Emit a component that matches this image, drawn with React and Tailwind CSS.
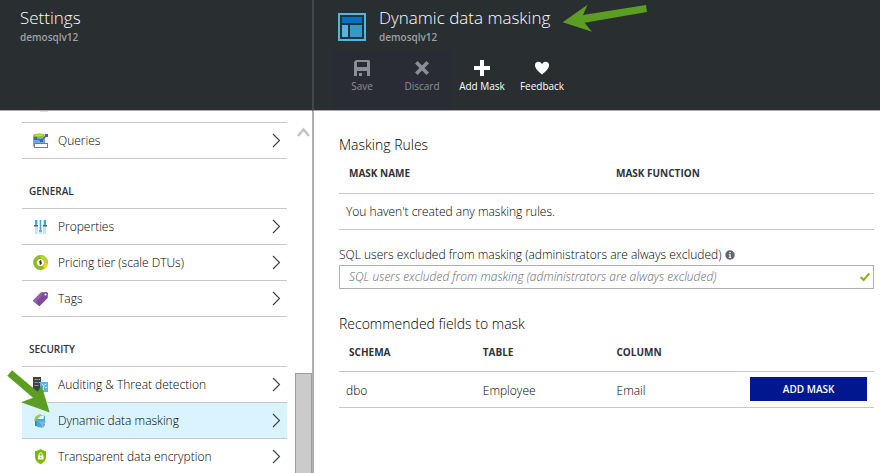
function Chevron() {
  return (
    <svg className="mr-1 ml-auto h-4 w-4 shrink-0" viewBox="0 0 16 16" fill="none" stroke="#3a3f45" strokeWidth="1.1">
      <path d="M6 1 L12.500 7.500 L6 14" />
    </svg>
  );
}

function QueriesIcon() {
  return (
    <svg className="h-4 w-4" viewBox="0 0 16 16">
      <path d="M0 3h12v11H1.500Q0 14 0 12.500z" fill="#55b5e6" />
      <ellipse cx="6" cy="2.300" rx="5.800" ry="1.900" fill="#8fc31f" />
      <ellipse cx="6" cy="2.200" rx="4.300" ry="1" fill="#c3dc3c" />
      <path d="M2.500 5.500 L8.500 7.500 L13.500 2.500" fill="none" stroke="#804998" strokeWidth="1.200" />
      <path d="M1 4h3v3H1zM7 6h3v3H7zM12 1h3v3h-3z" fill="#804998" />
      <rect x="1.500" y="10.500" width="13" height="4" fill="#fff" stroke="#7a7a7a" />
    </svg>
  );
}

function PropertiesIcon() {
  return (
    <svg className="h-4 w-4" viewBox="0 0 16 16">
      <path d="M2 1h3v14H2zM10 1h3v14h-3z" fill="#c3e5f4" />
      <path d="M6 1h3v14H6z" fill="#c3e5f4" />
      <path d="M2 1h2v5H2zM11 1h2v5h-2zM7 1h1v10H7z" fill="#3fa6d6" />
      <path d="M1 6h4v1.500H1zM10 6h4v1.500h-4z" fill="#55676f" />
      <path d="M6 11h3v2H6z" fill="#8aa7b4" />
    </svg>
  );
}

function PricingIcon() {
  return (
    <svg className="h-4 w-4" viewBox="0 0 16 16">
      <circle cx="7.500" cy="7.500" r="5.500" fill="#fff" stroke="#8cbf1a" strokeWidth="3.800" />
      <path d="M7.500 2 A5.500 5.500 0 0 1 13 7.500" fill="none" stroke="#b8d432" strokeWidth="3.800" />
      <path d="M13 7.500 A5.500 5.500 0 0 1 10.500 12.100" fill="none" stroke="#fcd116" strokeWidth="3.800" />
      <path d="M8.600 6.200H7q-.7 0-.7.650t.7.650h1q.7 0 .7.650t-.7.650H6.400M7.500 5.300v4.400" fill="none" stroke="#333" strokeWidth=".9" />
    </svg>
  );
}

function TagIcon() {
  return (
    <svg className="h-4 w-4" viewBox="0 0 16 16">
      <path d="M8 1.500 L13.500 1 Q15 1 15 2.500 L14.700 7 L7 14.800 Q6.300 15.300 5.600 14.800 L.5 10.300 Q0 9.500 .5 9z" fill="#804998" />
      <path d="M8 1.500 L.5 9 Q0 9.500 .5 10.300 L3 12.500 L10.500 1.300z" fill="#925fa8" />
      <circle cx="12.500" cy="3.500" r="1.100" fill="#fff" />
    </svg>
  );
}

function AuditIcon() {
  return (
    <svg className="h-4 w-4" viewBox="0 0 16 16">
      <path d="M0 0h8v15H0z" fill="#3e4246" />
      <path d="M1.500 2.500h4M1.500 5.500h4M1.500 8.500h4" stroke="#8f9498" strokeWidth="1" />
      <path d="M6 2h1v1H6zM6 5h1v1H6z" fill="#b8d432" />
      <path d="M7 5h8v10H7z" fill="#55b5e6" />
      <path d="M8.500 6.500l2 2 3-1.500M10.500 8.500v3M9 12.500h2M12 10.500h2" fill="none" stroke="#c5e9f8" strokeWidth="1" />
    </svg>
  );
}

function MaskingIcon() {
  return (
    <svg className="h-4 w-4" viewBox="0 0 16 16">
      <path d="M2 4 L6 2 L12 3v9L10 14.500Q5 15 2 12.500z" fill="#4aa9dc" />
      <path d="M6.500 3 L11 3 L10.500 6H4.500z" fill="#e8f6fb" />
      <path d="M1 7.500 Q2 2 8 1 L7.500 3.500 Q3.500 5 2 8.500z" fill="#a5ce3a" />
      <path d="M5.500 8.500h8L10.500 11.500v3l-2-1v-2z" fill="#a7afb5" />
      <path d="M2.800 8.500v4.500" stroke="#2f87ba" strokeWidth="1.500" />
    </svg>
  );
}

function ShieldIcon() {
  return (
    <svg className="h-4 w-4" viewBox="0 0 16 16">
      <path d="M7.500 0 Q10 2 13 2 V8 Q13 12.500 7.500 15.200 Q2 12.500 2 8 V2 Q5 2 7.500 0z" fill="#7fba00" />
      <path d="M5 6.500h5.500V10.500H5z" fill="#fff" />
      <path d="M6.200 7V5.500a1.600 1.600 0 0 1 3.200 0V7" fill="none" stroke="#fff" strokeWidth="1" />
      <path d="M7.300 7.800h1v1.400h-1z" fill="#7fba00" />
    </svg>
  );
}

function MenuGroup({ title, items }) {
  return (
    <section>
      {title && <h2 className="flex h-[49px] items-center px-[7px] pt-[14px] text-[10px] leading-4 font-semibold text-[#2f3338]">{title}</h2>}
      <ul className="border-t border-[#c8c8c8]">
        {items.map(({ label, Icon, active }) => (
          <li key={label} className="border-b border-[#c8c8c8]">
            <a href="#" aria-current={active ? "page" : undefined} className={`flex h-[35px] items-center gap-[9px] pl-[11px] ${active ? "bg-[#d9f4fe]" : ""}`}>
              <Icon />
              <span className="whitespace-nowrap">{label}</span>
              <Chevron />
            </a>
          </li>
        ))}
      </ul>
    </section>
  );
}

function Tool({ label, disabled, children }) {
  return (
    <button type="button" disabled={disabled} className={`flex w-[60px] flex-col items-center gap-px pt-[9px] text-[10px] leading-[16px] font-normal whitespace-nowrap ${disabled ? "text-[#8b8f94]" : "text-white"}`}>
      <svg className="h-[18px] w-[18px]" viewBox="0 0 18 18" fill="currentColor">{children}</svg>
      {label}
    </button>
  );
}

const th = "pl-[10px] text-left text-[10px] leading-4 font-bold text-[#2f3338]";

export default function App() {
  return (
    <div className="relative flex h-screen overflow-hidden bg-white font-['Open_Sans','Noto_Sans',sans-serif] text-[12px] font-light text-black">
      <aside className="flex w-[312px] shrink-0 flex-col">
        <header className="h-[111px] shrink-0 border-b border-[#a8abad] bg-[#292e31] px-5 pt-[6px]">
          <h1 className="text-[17px] leading-6 text-white">Settings</h1>
          <p className="text-[10px] leading-[14px] font-semibold text-[#9ea1a4]">demosqlv12</p>
        </header>
        <div className="flex min-h-0 flex-1">
          <nav className="ml-[22px] min-w-0 flex-1 overflow-hidden">
            <div className="h-[11px] pl-[18px]">
              <div className="h-px w-2 bg-[#f4e3a8]" />
            </div>
            <MenuGroup items={[{ label: "Queries", Icon: QueriesIcon }]} />
            <MenuGroup
              title="GENERAL"
              items={[
                { label: "Properties", Icon: PropertiesIcon },
                { label: "Pricing tier (scale DTUs)", Icon: PricingIcon },
                { label: "Tags", Icon: TagIcon },
              ]}
            />
            <MenuGroup
              title="SECURITY"
              items={[
                { label: "Auditing & Threat detection", Icon: AuditIcon },
                { label: "Dynamic data masking", Icon: MaskingIcon, active: true },
                { label: "Transparent data encryption", Icon: ShieldIcon },
              ]}
            />
          </nav>
          <div className="ml-2 flex w-[17px] shrink-0 flex-col">
            <svg className="mt-[15px] h-3 w-[17px]" viewBox="0 0 17 12" fill="none" stroke="#c4c4c4" strokeWidth="2.500">
              <path d="M3 10 L8.500 3.500 L14 10" />
            </svg>
            <div className="mt-[235px] flex-1 border border-b-0 border-[#9d9d9d] bg-[#cbcbcb]" />
          </div>
        </div>
      </aside>

      <main className="flex min-w-0 flex-1 flex-col">
        <header className="h-[111px] shrink-0 border-b border-l-2 border-b-[#a8abad] border-l-[#43474b] bg-[#292e31]">
          <div className="flex gap-[13px] pt-[6px] pl-[24px]">
            <svg className="mt-[7px] h-7 w-7" viewBox="0 0 28 28">
              <rect x="1" y="1" width="26" height="26" fill="#1f3340" stroke="#59b4d9" strokeWidth="2" />
              <path d="M4 4h20v6H4z" fill="#0072c6" />
              <path d="M4 12h6v12H4z" fill="#59b4d9" />
              <path d="M12 12h12v12H12z" fill="#3999c6" />
            </svg>
            <div>
              <h1 className="text-[17px] leading-6 text-white">Dynamic data masking</h1>
              <p className="text-[10px] leading-[14px] font-semibold text-[#9ea1a4]">demosqlv12</p>
            </div>
          </div>
          <div className="mt-[6px] ml-[18px] flex">
            <div className="flex h-[60px] bg-[#2a2c35]">
              <Tool label="Save" disabled>
                <path fillRule="evenodd" d="M3 1h13l1 1v15h-3v-5H4v5H1V3zM4 3v5h10V3zM6 14h3v3H6z" />
              </Tool>
              <Tool label="Discard" disabled>
                <path d="M4.500 2 L9 6.500 L13.500 2 L16 4.500 L11.500 9 L16 13.500 L13.500 16 L9 11.500 L4.500 16 L2 13.500 L6.500 9 L2 4.500z" />
              </Tool>
            </div>
            <Tool label="Add Mask">
              <path d="M7 1h4v6h6v4h-6v6H7v-6H1V7h6z" />
            </Tool>
            <Tool label="Feedback">
              <path d="M9 5 Q10.500 2.500 13 2.700 Q16.300 3.200 16 7 Q15.500 10.500 9 15.500 Q2.500 10.500 2 7 Q1.700 3.200 5 2.700 Q7.500 2.500 9 5z" />
            </Tool>
          </div>
        </header>

        <div className="flex-1 border-l-2 border-[#b0b0b0] pt-[24px] pr-[6px] pl-[25px]">
          <h2 className="text-[14px] leading-5">Masking Rules</h2>
          <table className="w-full table-fixed border-collapse">
            <thead>
              <tr className="h-[38px] border-b border-[#c8c8c8]">
                <th className={`${th} w-[267px] pb-[2px]`}>MASK NAME</th>
                <th className={`${th} pb-[2px]`}>MASK FUNCTION</th>
              </tr>
            </thead>
            <tbody>
              <tr className="h-[36px] border-b border-[#c8c8c8]">
                <td colSpan={2} className="pt-[2px] pl-[7px] leading-4">You haven't created any masking rules.</td>
              </tr>
            </tbody>
          </table>

          <div className="mt-[17px] flex items-center gap-1">
            <label htmlFor="excluded" className="leading-4">SQL users excluded from masking (administrators are always excluded)</label>
            <svg className="h-[10px] w-[10px]" viewBox="0 0 10 10">
              <circle cx="5" cy="5" r="4.700" fill="#5f656b" />
              <path d="M4.300 2h1.400v1.300H4.300zM3.800 4.300h1.900v3h.6v.8H3.800v-.8h.6V5.100h-.6z" fill="#fff" />
            </svg>
          </div>
          <div className="mt-[2px] flex h-6 items-center border border-[#adadad] pr-[3px]">
            <input id="excluded" type="text" placeholder="SQL users excluded from masking (administrators are always excluded)" className="min-w-0 flex-1 pl-[9px] italic outline-none placeholder:text-[#66696d]" />
            <svg className="h-[10px] w-[10px]" viewBox="0 0 10 10" fill="none" stroke="#7fba00" strokeWidth="2">
              <path d="M.7 5 L3.600 8 L9.300 1.500" />
            </svg>
          </div>

          <h2 className="mt-[25px] text-[14px] leading-5">Recommended fields to mask</h2>
          <table className="w-full table-fixed border-collapse">
            <thead>
              <tr className="h-[38px] border-b border-[#c8c8c8]">
                <th className={th}>SCHEMA</th>
                <th className={th}>TABLE</th>
                <th className={th}>COLUMN</th>
                <th aria-label="Action" />
              </tr>
            </thead>
            <tbody>
              <tr className="h-[36px] border-b border-[#c8c8c8] leading-4">
                <td className="pt-[2px] pl-[7px]">dbo</td>
                <td className="pt-[2px] pl-[10px]">Employee</td>
                <td className="pt-[2px] pl-[10px]">Email</td>
                <td className="pr-[7px] pb-[2px] pl-[10px]">
                  <button type="button" className="block h-6 w-full bg-[#00188f] text-[10px] font-semibold text-white">ADD MASK</button>
                </td>
              </tr>
            </tbody>
          </table>
        </div>
      </main>

      <svg className="pointer-events-none absolute top-1 left-[562px] h-7 w-[86px]" viewBox="562 4 86 28" fill="#5c9e22">
        <path d="M562.700 22.300 L587.500 4.700 L583 15 L646 5 L647 12 L584.500 22.700 L592 31.700z" />
      </svg>
      <svg className="pointer-events-none absolute top-[370px] left-[7px] h-[43px] w-[43px]" viewBox="7 370 43 43" fill="#5c9e22">
        <path d="M49.700 412.500 L41.500 385.300 L37.700 391.700 L12 370.300 L7.300 375.700 L33 397.700 L21 402.300z" />
      </svg>
    </div>
  );
}
